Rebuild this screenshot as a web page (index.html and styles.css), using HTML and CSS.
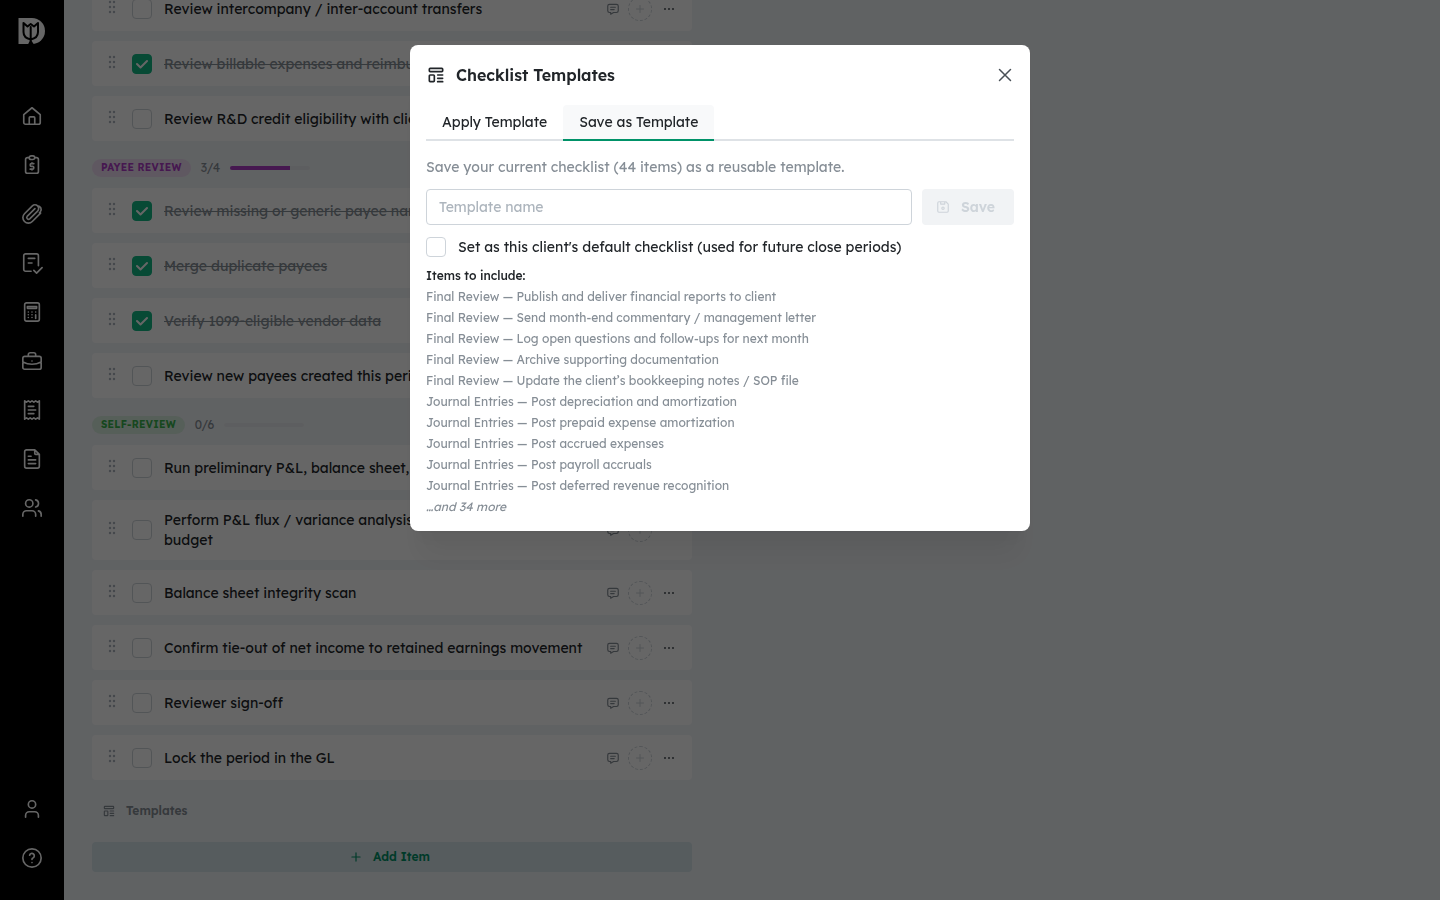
FILE: index.html
```html
<!DOCTYPE html>
<html lang="en">
  <head>
    <meta charset="utf-8">
    <meta name="viewport" content="width=device-width, initial-scale=1">
    <link rel="stylesheet" href="styles.css">
    <title>Month-end checklist</title>
  </head>
  <body>
    <!-- shared icons -->
    <svg class="icon-defs" aria-hidden="true">
      <symbol id="i-comment" viewBox="0 0 24 24"><path d="M8 9h8M8 13h6M18 4a3 3 0 0 1 3 3v8a3 3 0 0 1-3 3h-5l-5 3v-3H6a3 3 0 0 1-3-3V7a3 3 0 0 1 3-3z"/></symbol>
      <symbol id="i-plus" viewBox="0 0 24 24"><path d="M12 5v14M5 12h14"/></symbol>
      <symbol id="i-dots" viewBox="0 0 14 14"><path d="M3 7h0M7 7h0M11 7h0"/></symbol>
      <symbol id="i-template" viewBox="0 0 24 24"><path d="M5 4h14a1 1 0 0 1 1 1v2a1 1 0 0 1-1 1H5a1 1 0 0 1-1-1V5a1 1 0 0 1 1-1zM5 12h4a1 1 0 0 1 1 1v6a1 1 0 0 1-1 1H5a1 1 0 0 1-1-1v-6a1 1 0 0 1 1-1zM14 12h6M14 16h6M14 20h6"/></symbol>
      <symbol id="i-grip" viewBox="0 0 8 14"><path d="M2 2h0M6 2h0M2 7h0M6 7h0M2 12h0M6 12h0"/></symbol>
    </svg>

    <div class="app">
      <nav class="sidebar" aria-label="Main">
        <a class="logo" href="#" aria-label="Home page">
          <svg viewBox="0 0 28 28"><path class="logo-shape" d="M.5 1H14a13 13 0 0 1 0 26H.5z"/><path class="logo-line" d="M5.500 6v9q0 6 7.200 7.500 7.300-1.500 7.300-7.500V6L16 9.500 12.700 7 9.500 9.500zM12.700 10v12"/><path class="logo-stem" d="M11.700 22h2v2l2.500 4h-6.500l2-4z"/></svg>
        </a>
        <div class="nav-links">
          <a href="#" aria-label="Home"><svg viewBox="0 0 24 24"><path d="M3 10.500 12 3l9 7.500V19a2 2 0 0 1-2 2H5a2 2 0 0 1-2-2zM9 21v-7a1 1 0 0 1 1-1h4a1 1 0 0 1 1 1v7"/></svg></a>
          <a href="#" aria-label="Close"><svg viewBox="0 0 24 24"><path d="M9 4H7a2 2 0 0 0-2 2v13a2 2 0 0 0 2 2h10a2 2 0 0 0 2-2V6a2 2 0 0 0-2-2h-2M11 2h2a2 2 0 0 1 0 4h-2a2 2 0 0 1 0-4M14 10.500h-2.500a1.500 1.500 0 0 0 0 3h1a1.500 1.500 0 0 1 0 3H10M12 16.500v1M12 9.500v1"/></svg></a>
          <a href="#" aria-label="Attachments"><svg viewBox="0 0 24 24"><path d="M21.400 11.100 12.300 20.200a6 6 0 0 1-8.500-8.500l8.600-8.600a4 4 0 0 1 5.700 5.700L9.500 17.400a2 2 0 0 1-2.800-2.800l8.500-8.500M18.100 3.100a4 4 0 0 1 3 6.500l-1 1"/></svg></a>
          <a href="#" aria-label="Tasks"><svg viewBox="0 0 24 24"><path d="M11 21H5a2 2 0 0 1-2-2V4a2 2 0 0 1 2-2h12a2 2 0 0 1 2 2v11M8 7h7M8 12h4M14 20l3 3 6-6"/></svg></a>
          <a href="#" aria-label="Calculator"><svg viewBox="0 0 24 24"><path d="M6 2h12a2 2 0 0 1 2 2v16a2 2 0 0 1-2 2H6a2 2 0 0 1-2-2V4a2 2 0 0 1 2-2zM7 6h10v2H7zM8 12h0M12 12h0M16 12h0M8 15h0M12 15h0M8 18h0M12 18h0M16 15v4"/></svg></a>
          <a href="#" aria-label="Clients"><svg viewBox="0 0 24 24"><path d="M4 7h16a2 2 0 0 1 2 2v10a2 2 0 0 1-2 2H4a2 2 0 0 1-2-2V9a2 2 0 0 1 2-2zM8 7V5a2 2 0 0 1 2-2h4a2 2 0 0 1 2 2v2M12 12h0M2 13q10 5 20 0"/></svg></a>
          <a href="#" aria-label="Receipts"><svg viewBox="0 0 24 24"><path d="M4 2l2 1.500L8 2l2 1.500L12 2l2 1.500L16 2l2 1.500L20 2v20l-2-1.500-2 1.500-2-1.500-2 1.500-2-1.500L8 22l-2-1.500L4 22zM8 8h6M8 12h8M8 16h6"/></svg></a>
          <a href="#" aria-label="Reports"><svg viewBox="0 0 24 24"><path d="M15 2v4a1 1 0 0 0 1 1h4M15 2H6a2 2 0 0 0-2 2v16a2 2 0 0 0 2 2h12a2 2 0 0 0 2-2V7zM8 9h3M8 13h8M8 17h8"/></svg></a>
          <a href="#" aria-label="Team"><svg viewBox="0 0 24 24"><path d="M5 7a4 4 0 1 0 8 0 4 4 0 1 0-8 0M2 21v-2a4 4 0 0 1 4-4h6a4 4 0 0 1 4 4v2M16 3.100a4 4 0 0 1 0 7.800M22 21v-2a4 4 0 0 0-3-3.900"/></svg></a>
        </div>
        <div class="nav-links nav-bottom">
          <a href="#" aria-label="Account"><svg viewBox="0 0 24 24"><path d="M8 7a4 4 0 1 0 8 0 4 4 0 1 0-8 0M5 21v-2a4 4 0 0 1 4-4h6a4 4 0 0 1 4 4v2"/></svg></a>
          <a href="#" aria-label="Help"><svg viewBox="0 0 24 24"><path d="M2 12a10 10 0 1 0 20 0 10 10 0 1 0-20 0M12 17h0M12 13.500a1.500 1.500 0 0 1 1-1.500 2.600 2.600 0 1 0-3.600-3"/></svg></a>
        </div>
      </nav>

      <main class="main">
        <div class="checklist" id="checklist">
          <ul class="items" data-items="Review intercompany / inter-account transfers|*Review billable expenses and reimbursements|Review R&amp;D credit eligibility with client"></ul>
          <div class="section-head">
            <span class="badge badge-payee">PAYEE REVIEW</span>
            <span class="count">3/4</span>
            <span class="bar"><span class="bar-fill" style="width: 75%"></span></span>
          </div>
          <ul class="items" data-items="*Review missing or generic payee names|*Merge duplicate payees|*Verify 1099-eligible vendor data|Review new payees created this period"></ul>
          <div class="section-head">
            <span class="badge badge-self">SELF-REVIEW</span>
            <span class="count">0/6</span>
            <span class="bar"></span>
          </div>
          <ul class="items" data-items="Run preliminary P&amp;L, balance sheet, cash flow|Perform P&amp;L flux / variance analysis vs. prior month, year and budget|Balance sheet integrity scan|Confirm tie-out of net income to retained earnings movement|Reviewer sign-off|Lock the period in the GL"></ul>
          <button class="templates-btn" type="button"><svg><use href="#i-template"/></svg>Templates</button>
          <button class="add-btn" type="button"><svg><use href="#i-plus"/></svg>Add Item</button>
        </div>
      </main>
    </div>

    <div class="overlay">
      <section class="modal" role="dialog" aria-modal="true" aria-labelledby="modal-title">
        <header class="modal-header">
          <svg class="title-icon"><use href="#i-template"/></svg>
          <h2 id="modal-title">Checklist Templates</h2>
          <button class="close-btn" type="button" aria-label="Close dialog"><svg viewBox="0 0 14 14"><path d="M1.500 1.500l11 11M12.500 1.500l-11 11"/></svg></button>
        </header>
        <div class="tabs" role="tablist">
          <button class="tab" type="button" role="tab" aria-selected="false">Apply Template</button>
          <button class="tab active" type="button" role="tab" aria-selected="true">Save as Template</button>
        </div>
        <form class="save-form">
          <p class="hint">Save your current checklist (44 items) as a reusable template.</p>
          <div class="name-row">
            <input class="name-input" type="text" placeholder="Template name" aria-label="Template name">
            <button class="save-btn" type="submit" disabled><svg viewBox="0 0 24 24"><path d="M6 3h11l4 4v12a2 2 0 0 1-2 2H5a2 2 0 0 1-2-2V5a2 2 0 0 1 2-2zM10 14a2 2 0 1 0 4 0 2 2 0 1 0-4 0M8 3v4h7V3"/></svg>Save</button>
          </div>
          <label class="default-row">
            <input class="check" type="checkbox">
            Set as this client's default checklist (used for future close periods)
          </label>
        </form>
        <h3 class="include-title">Items to include:</h3>
        <ul class="include-list">
          <li>Final Review — Publish and deliver financial reports to client</li>
          <li>Final Review — Send month-end commentary / management letter</li>
          <li>Final Review — Log open questions and follow-ups for next month</li>
          <li>Final Review — Archive supporting documentation</li>
          <li>Final Review — Update the client’s bookkeeping notes / SOP file</li>
          <li>Journal Entries — Post depreciation and amortization</li>
          <li>Journal Entries — Post prepaid expense amortization</li>
          <li>Journal Entries — Post accrued expenses</li>
          <li>Journal Entries — Post payroll accruals</li>
          <li>Journal Entries — Post deferred revenue recognition</li>
          <li class="more">…and 34 more</li>
        </ul>
      </section>
    </div>
    <script src="script.js"></script>
  </body>
</html>
```
FILE: styles.css
```css
* {
  box-sizing: border-box;
}

body {
  margin: 0;
  background: #f1f4f8;
  color: #212529;
  font-family: Lexend, Inter, sans-serif;
  font-size: 14px;
  line-height: 20px;
}

button,
input {
  font: inherit;
  color: inherit;
}

button {
  border: 0;
  padding: 0;
  background: none;
  cursor: pointer;
}

ul,
h2,
h3,
p {
  margin: 0;
  padding: 0;
  list-style: none;
}

svg {
  display: block;
  flex: none;
  fill: none;
  stroke: currentColor;
  stroke-width: 2;
  stroke-linecap: round;
  stroke-linejoin: round;
}

.icon-defs {
  display: none;
}

.app {
  display: flex;
  height: 100vh;
}

/* sidebar */
.sidebar {
  display: flex;
  flex-direction: column;
  align-items: center;
  width: 64px;
  padding: 17px 0 31px;
  background: #000;
  color: #fff;
}

.sidebar a {
  color: inherit;
}

.logo svg {
  width: 28px;
  height: 28px;
}

.logo-shape {
  fill: currentColor;
  stroke: none;
}

.logo-line {
  stroke: #000;
}

.logo-stem {
  fill: #000;
  stroke: none;
}

.nav-links {
  display: flex;
  flex-direction: column;
  gap: 27px;
  margin-top: 60px;
}

.nav-links svg {
  width: 22px;
  height: 22px;
  stroke-width: 1.8;
}

.nav-bottom {
  margin-top: auto;
}

/* checklist, kept scrolled to its end */
.main {
  flex: 1;
  display: flex;
  flex-direction: column;
  justify-content: flex-end;
  padding: 0 28px 28px;
  overflow: hidden;
}

.checklist {
  width: 100%;
  max-width: 600px;
}

.items {
  display: flex;
  flex-direction: column;
  gap: 10px;
}

.item {
  display: flex;
  align-items: center;
  min-height: 45px;
  padding: 10px 16px;
  background: #fff;
  border-radius: 4px;
}

.grip {
  width: 8px;
  height: 14px;
  margin: 0 16px 4px 0;
  color: #adb5bd;
  stroke-width: 2.4;
}

.check {
  appearance: none;
  flex: none;
  width: 20px;
  height: 20px;
  margin: 0 12px 0 0;
  border: 1px solid #ced4da;
  border-radius: 4px;
  background: #fff;
}

.check:checked {
  border-color: #12b886;
  background: #12b886 url("data:image/svg+xml,%3Csvg xmlns='http://www.w3.org/2000/svg' viewBox='0 0 12 12'%3E%3Cpath d='M1 6l3.500 3.500L11 3' fill='none' stroke='white' stroke-width='2' stroke-linecap='round' stroke-linejoin='round'/%3E%3C/svg%3E") center / 12px no-repeat;
}

.item-label {
  flex: 1;
}

.done .item-label {
  color: #868e96;
  text-decoration: line-through;
}

.actions {
  display: flex;
  align-items: center;
  gap: 8px;
  margin-left: 10px;
}

.comment-btn svg {
  width: 14px;
  height: 14px;
  color: #868e96;
}

.assign-btn {
  display: flex;
  align-items: center;
  justify-content: center;
  width: 24px;
  height: 24px;
  border: 1px dashed #ced4da;
  border-radius: 50%;
  color: #ced4da;
}

.assign-btn svg {
  width: 12px;
  height: 12px;
}

.more-btn svg {
  width: 14px;
  height: 14px;
  margin-left: 2px;
  color: #495057;
}

.section-head {
  display: flex;
  align-items: center;
  gap: 10px;
  height: 18px;
  margin: 18px 0 11px;
}

.badge {
  padding: 0 9px;
  border-radius: 9px;
  font-size: 10px;
  font-weight: 700;
  line-height: 18px;
  letter-spacing: 0.025em;
}

.badge-payee {
  background: #eedcf2;
  color: #ae3ec9;
}

.badge-self {
  background: #d8eddf;
  color: #37b24d;
}

.count {
  font-size: 12px;
  color: #868e96;
}

.bar {
  width: 80px;
  height: 4px;
  border-radius: 4px;
  background: #e9ecef;
  overflow: hidden;
}

.bar-fill {
  display: block;
  height: 4px;
  background: #ae3ec9;
}

.templates-btn,
.add-btn {
  display: flex;
  align-items: center;
  gap: 10px;
  height: 30px;
  border-radius: 4px;
  font-size: 12px;
  font-weight: 600;
}

.templates-btn {
  margin: 16px 0;
  padding: 0 10px;
  color: #868e96;
}

.add-btn {
  justify-content: center;
  width: 100%;
  padding-right: 5px;
  background: #d6e6ea;
  color: #009268;
}

.templates-btn svg,
.add-btn svg {
  width: 14px;
  height: 14px;
}

/* modal */
.overlay {
  position: fixed;
  inset: 0;
  display: flex;
  align-items: flex-start;
  justify-content: center;
  padding: 45px 16px;
  background: rgba(0, 0, 0, 0.6);
}

.modal {
  width: 100%;
  max-width: 620px;
  padding: 16px 16px 14px;
  background: #fff;
  border-radius: 8px;
  box-shadow: 0 1px 3px rgba(0, 0, 0, 0.05), 0 36px 28px -7px rgba(0, 0, 0, 0.05), 0 17px 17px -7px rgba(0, 0, 0, 0.04);
}

.modal-header {
  display: flex;
  align-items: center;
  gap: 10px;
  height: 28px;
  margin-bottom: 16px;
}

.modal-header h2 {
  flex: 1;
  font-size: 16px;
  font-weight: 600;
}

.title-icon {
  width: 20px;
  height: 20px;
}

.close-btn {
  padding: 2px;
  color: #495057;
}

.close-btn svg {
  width: 14px;
  height: 14px;
  stroke-width: 1.5;
}

.tabs {
  display: flex;
  height: 36px;
  margin-bottom: 16px;
  box-shadow: inset 0 -2px #dee2e6;
}

.tab {
  padding: 0 16px;
  border-bottom: 2px solid transparent;
  border-radius: 4px 4px 0 0;
}

.tab.active {
  background: #f8f9fa;
  border-color: #009268;
}

.hint {
  color: #868e96;
}

.name-row {
  display: flex;
  gap: 10px;
  margin: 12px 0;
}

.name-input {
  flex: 1;
  min-width: 0;
  height: 36px;
  padding: 0 12px;
  border: 1px solid #ced4da;
  border-radius: 4px;
}

.name-input::placeholder {
  color: #adb5bd;
}

.save-btn {
  display: flex;
  align-items: center;
  gap: 11px;
  height: 36px;
  padding: 0 19px 0 14px;
  border-radius: 4px;
  background: #f1f3f5;
  color: #ced4da;
  font-weight: 600;
}

.save-btn svg {
  width: 14px;
  height: 14px;
}

.default-row {
  display: flex;
  align-items: center;
}

.include-title {
  margin-top: 8px;
  font-size: 12px;
  font-weight: 500;
  line-height: 21px;
}

.include-list {
  font-size: 12px;
  line-height: 21px;
  color: #868e96;
}

.more {
  font-style: italic;
}
```
FILE: script.js
```js
// fill each section with its rows, a leading * marks a finished item
document.querySelectorAll(".items").forEach(function (list) {
  list.dataset.items.split("|").forEach(function (text) {
    var done = text[0] === "*";
    var label = done ? text.slice(1) : text;
    var row = document.createElement("li");
    row.className = done ? "item done" : "item";
    row.innerHTML =
      '<svg class="grip"><use href="#i-grip"/></svg>' +
      '<input class="check" type="checkbox"' + (done ? " checked" : "") + ">" +
      '<span class="item-label"></span>' +
      '<div class="actions">' +
      '<button class="comment-btn" type="button" aria-label="Comments"><svg><use href="#i-comment"/></svg></button>' +
      '<button class="assign-btn" type="button" aria-label="Assign"><svg><use href="#i-plus"/></svg></button>' +
      '<button class="more-btn" type="button" aria-label="More"><svg><use href="#i-dots"/></svg></button>' +
      "</div>";
    row.querySelector(".item-label").textContent = label;
    row.querySelector(".check").setAttribute("aria-label", label);
    list.appendChild(row);
  });
});
```
